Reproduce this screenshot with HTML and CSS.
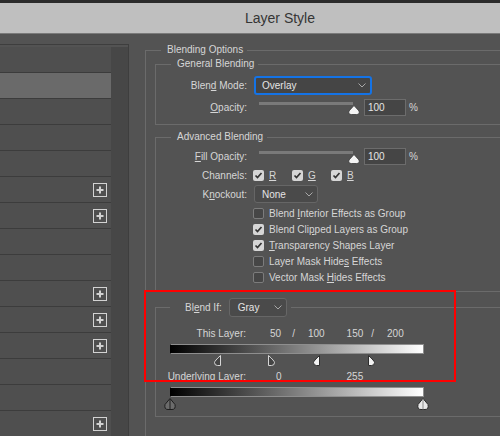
FILE: index.html
```html
<!DOCTYPE html>
<html lang="en">
<head>
  <meta charset="UTF-8" />
  <title>Layer Style</title>
  <link rel="stylesheet" href="styles.css">
</head>
<body>
  <div class="topbar"></div>
  <div class="titlebar">Layer Style</div>

  <div class="dialog">
    <aside class="styles-list">
      <ul class="rows">
        <li></li>
        <li class="sel"></li>
        <li></li>
        <li></li>
        <li></li>
        <li><svg class="add" width="14" height="14"><rect x="0.5" y="0.5" width="13" height="13" fill="none" stroke="#d2d2d2"/><path d="M7 3.5v7M3.5 7h7" stroke="#d2d2d2" stroke-width="2"/></svg></li>
        <li><svg class="add" width="14" height="14"><rect x="0.5" y="0.5" width="13" height="13" fill="none" stroke="#d2d2d2"/><path d="M7 3.5v7M3.5 7h7" stroke="#d2d2d2" stroke-width="2"/></svg></li>
        <li></li>
        <li></li>
        <li><svg class="add" width="14" height="14"><rect x="0.5" y="0.5" width="13" height="13" fill="none" stroke="#d2d2d2"/><path d="M7 3.5v7M3.5 7h7" stroke="#d2d2d2" stroke-width="2"/></svg></li>
        <li><svg class="add" width="14" height="14"><rect x="0.5" y="0.5" width="13" height="13" fill="none" stroke="#d2d2d2"/><path d="M7 3.5v7M3.5 7h7" stroke="#d2d2d2" stroke-width="2"/></svg></li>
        <li><svg class="add" width="14" height="14"><rect x="0.5" y="0.5" width="13" height="13" fill="none" stroke="#d2d2d2"/><path d="M7 3.5v7M3.5 7h7" stroke="#d2d2d2" stroke-width="2"/></svg></li>
        <li></li>
        <li></li>
        <li><svg class="add" width="14" height="14"><rect x="0.5" y="0.5" width="13" height="13" fill="none" stroke="#d2d2d2"/><path d="M7 3.5v7M3.5 7h7" stroke="#d2d2d2" stroke-width="2"/></svg></li>
      </ul>
      <div class="scroll"></div>
    </aside>

    <main class="options">
      <fieldset class="outer">
        <legend>Blending Options</legend>

        <!-- general -->
        <fieldset class="group general">
          <legend>General Blending</legend>
          <div class="field">
            <label>Blen<u>d</u> Mode:</label>
            <div class="select blend-mode"><span>Overlay</span>
              <svg width="8" height="5"><path d="M0.5 0.5L4 4L7.5 0.5" fill="none" stroke="#a8a8a8"/></svg>
            </div>
          </div>
          <div class="field slider-row">
            <label><u>O</u>pacity:</label>
            <div class="ctrl">
              <div class="slider">
                <div class="track"></div>
                <svg class="knob" width="12" height="10"><path d="M6 0.5L11 6Q12 9.5 8.5 9.5H3.5Q0 9.5 1 6Z" fill="#f4f4f4" stroke="#3a3a3a" stroke-width="0.8"/></svg>
              </div>
              <div class="num">100</div>
              <span class="pct">%</span>
            </div>
          </div>
        </fieldset>

        <!-- advanced -->
        <fieldset class="group advanced">
          <legend>Advanced Blending</legend>
          <div class="field slider-row">
            <label><u>F</u>ill Opacity:</label>
            <div class="ctrl">
              <div class="slider">
                <div class="track"></div>
                <svg class="knob" width="12" height="10"><path d="M6 0.5L11 6Q12 9.5 8.5 9.5H3.5Q0 9.5 1 6Z" fill="#f4f4f4" stroke="#3a3a3a" stroke-width="0.8"/></svg>
              </div>
              <div class="num">100</div>
              <span class="pct">%</span>
            </div>
          </div>
          <div class="field channels">
            <label>Channels:</label>
            <div class="ctrl">
              <span class="chan"><i class="box on"><svg width="11" height="11"><path d="M2.5 5.5L4.5 7.5L8.5 3" fill="none" stroke="#333" stroke-width="1.7"/></svg></i><u>R</u></span>
              <span class="chan"><i class="box on"><svg width="11" height="11"><path d="M2.5 5.5L4.5 7.5L8.5 3" fill="none" stroke="#333" stroke-width="1.7"/></svg></i><u>G</u></span>
              <span class="chan"><i class="box on"><svg width="11" height="11"><path d="M2.5 5.5L4.5 7.5L8.5 3" fill="none" stroke="#333" stroke-width="1.7"/></svg></i><u>B</u></span>
            </div>
          </div>
          <div class="field knockout">
            <label>K<u>n</u>ockout:</label>
            <div class="select small"><span>None</span>
              <svg width="8" height="5"><path d="M0.5 0.5L4 4L7.5 0.5" fill="none" stroke="#a8a8a8"/></svg>
            </div>
          </div>
          <ul class="checks">
            <li><i class="box"></i><span>Blend <u>I</u>nterior Effects as Group</span></li>
            <li><i class="box on"><svg width="11" height="11"><path d="M2.5 5.5L4.5 7.5L8.5 3" fill="none" stroke="#333" stroke-width="1.7"/></svg></i><span>Blend Cli<u>p</u>ped Layers as Group</span></li>
            <li><i class="box on"><svg width="11" height="11"><path d="M2.5 5.5L4.5 7.5L8.5 3" fill="none" stroke="#333" stroke-width="1.7"/></svg></i><span><u>T</u>ransparency Shapes Layer</span></li>
            <li><i class="box"></i><span>Layer Mask Hide<u>s</u> Effects</span></li>
            <li><i class="box"></i><span>Vector Mask <u>H</u>ides Effects</span></li>
          </ul>
        </fieldset>

        <!-- blend if -->
        <fieldset class="group blendif">
          <legend>
            <label>Bl<u>e</u>nd If:</label>
            <div class="select gray"><span>Gray</span>
              <svg width="8" height="5"><path d="M0.5 0.5L4 4L7.5 0.5" fill="none" stroke="#a8a8a8"/></svg>
            </div>
          </legend>

          <div class="range-row">
            <span class="rlabel">This Layer:</span>
            <span class="v1">50</span><span class="sl1">/</span><span class="v2">100</span>
            <span class="v3">150</span><span class="sl2">/</span><span class="v4">200</span>
          </div>
          <div class="grad"></div>
          <div class="thumbs">
            <svg class="thumb" style="left:44px" width="7" height="11"><path d="M6.5 0.5V10.5H3.5Q0.5 10.5 0.5 7.5Q0.5 6 6.5 0.5Z" fill="#444" stroke="#d6d6d6"/></svg>
            <svg class="thumb" style="left:98px" width="7" height="11"><path d="M0.5 0.5V10.5H3.5Q6.5 10.5 6.5 7.5Q6.5 6 0.5 0.5Z" fill="#444" stroke="#d6d6d6"/></svg>
            <svg class="thumb" style="left:143px" width="7" height="11"><path d="M6.5 0.5V10.5H3.5Q0.5 10.5 0.5 7.5Q0.5 6 6.5 0.5Z" fill="#f2f2f2" stroke="#2e2e2e"/></svg>
            <svg class="thumb" style="left:198px" width="7" height="11"><path d="M0.5 0.5V10.5H3.5Q6.5 10.5 6.5 7.5Q6.5 6 0.5 0.5Z" fill="#f2f2f2" stroke="#2e2e2e"/></svg>
          </div>

          <div class="range-row under">
            <span class="rlabel">Underlying Layer:</span>
            <span class="u1">0</span><span class="u2">255</span>
          </div>
          <div class="grad"></div>
          <div class="thumbs tall">
            <svg class="thumb" style="left:-6px" width="12" height="12"><path d="M6 0.5L11 6.5Q12 11.5 8 11.5H4Q0 11.5 1 6.5Z" fill="#6c6c6c" stroke="#1e1e1e"/><path d="M6 1V11.5" stroke="#1e1e1e"/></svg>
            <svg class="thumb" style="left:247px" width="12" height="12"><path d="M6 0.5L11 6.5Q12 11.5 8 11.5H4Q0 11.5 1 6.5Z" fill="#e8e8e8" stroke="#2a2a2a"/><path d="M6 1V11.5" stroke="#8a8a8a"/></svg>
          </div>
        </fieldset>
      </fieldset>
    </main>
  </div>

  <div class="callout"></div>
</body>
</html>
```

FILE: styles.css
```css
* {
  box-sizing: border-box;
}
html, body {
  margin: 0;
  padding: 0;
}
body {
  width: 500px;
  height: 436px;
  overflow: hidden;
  position: relative;
  background: #535353;
  font-family: "Liberation Sans", Arial, sans-serif;
  font-size: 10px;
  color: #d6d6d6;
}
.topbar {
  height: 3px;
  background: #2b2b2b;
}
.titlebar {
  width: 560px;
  height: 31px;
  line-height: 30px;
  background: #bfbfbf;
  border-bottom: 1px solid #7a7a7a;
  text-align: center;
  font-size: 14px;
  color: #353535;
}
.dialog {
  display: flex;
  align-items: flex-start;
}

/* left list */
.styles-list {
  display: flex;
  margin-top: 10px;
  padding-top: 2px;
  border-top: 1px solid #3e3e3e;
  border-right: 1px solid #3e3e3e;
}
.rows {
  list-style: none;
  margin: 0;
  padding: 0;
  width: 111px;
}
.rows li {
  height: 26px;
  background: #4f4f4f;
  border-bottom: 1px solid #3c3c3c;
  display: flex;
  align-items: center;
  justify-content: flex-end;
  padding-right: 4px;
}
.rows li.sel {
  background: #6a6a6a;
}
.scroll {
  width: 17px;
  background: #474747;
}

/* right side */
.options {
  margin-left: 16px;
}
fieldset {
  margin: 0;
  min-width: 0;
  border: 1px solid #6b6b6b;
}
legend {
  line-height: 12px;
  padding: 0 4px 0 6px;
}
.outer {
  width: 420px;
  margin-top: 10px;
  padding: 2px 0 40px 9px;
}
.outer > legend {
  margin-left: 6px;
}
.group {
  width: 400px;
  padding: 0;
}
.group > legend {
  margin-left: 15px;
}
.general {
  padding: 6px 0 8px;
}
.advanced {
  margin-top: 6px;
  padding: 5px 0 6px;
}

.field {
  display: grid;
  grid-template-columns: 91px auto;
  column-gap: 7px;
  align-items: center;
}
.field label {
  text-align: right;
}
.field + .field {
  margin-top: 4px;
}
.select {
  display: flex;
  align-items: center;
  justify-content: space-between;
  height: 19px;
  padding: 0 4px 0 7px;
  background: #4a4a4a;
  border: 1px solid #666;
  border-radius: 3px;
  color: #e4e4e4;
}
.blend-mode {
  width: 118px;
  padding-left: 6px;
  background: #454545;
  border: 2px solid #1473e6;
}
.select.small {
  width: 64px;
  height: 18px;
}
.ctrl {
  display: flex;
  align-items: center;
}
.slider {
  width: 106px;
  height: 17px;
  margin-right: 4px;
  display: flex;
  flex-direction: column;
}
.track {
  width: 94px;
  height: 3px;
  margin: 3px 0 0 5px;
  background: #7a7a7a;
}
.knob {
  display: block;
  margin-left: 94px;
}
.num {
  width: 42px;
  height: 17px;
  line-height: 15px;
  padding-left: 3px;
  background: #454545;
  border: 1px solid #6c6c6c;
  color: #e6e6e6;
}
.pct {
  margin-left: 3px;
}

.advanced .channels {
  margin-top: 2px;
  height: 16px;
}
.advanced .knockout {
  margin-top: 2px;
}
.chan {
  display: flex;
  align-items: center;
  width: 40px;
  margin-left: -1px;
}
.box {
  display: block;
  flex: none;
  width: 11px;
  height: 11px;
  margin-right: 5px;
  border: 1px solid #7c7c7c;
  border-radius: 2px;
  background: #464646;
}
.box.on {
  border: none;
  background: #d6d6d6;
}
.box svg {
  display: block;
}
.checks {
  list-style: none;
  margin: 2px 0 0 97px;
  padding: 0;
}
.checks li {
  display: flex;
  align-items: center;
  height: 16px;
}

/* blend if */
.blendif {
  margin-top: 6px;
  padding: 0 0 6px;
}
.blendif > legend {
  display: flex;
  align-items: center;
  margin-left: 14px;
  padding: 0 4px 0 15px;
}
.select.gray {
  width: 58px;
  margin-left: 7px;
  padding-left: 8px;
}
.range-row {
  display: flex;
  height: 12px;
  line-height: 12px;
  margin-top: 11px;
}
.range-row.under {
  margin-top: 5px;
}
.rlabel {
  width: 90px;
  text-align: right;
}
.v1 { margin-left: 24px; }
.sl1 { margin-left: 11px; }
.v2 { margin-left: 13px; }
.v3 { margin-left: 22px; }
.sl2 { margin-left: 8px; }
.v4 { margin-left: 13px; }
.u1 { margin-left: 30px; }
.u2 { margin-left: 65px; }
.grad {
  width: 254px;
  height: 10px;
  margin: 4px 0 0 14px;
  border: 1px solid #8e8e8e;
  border-left-color: #000;
  background: linear-gradient(to right, #000, #fff);
}
.thumbs {
  position: relative;
  width: 254px;
  height: 11px;
  margin: 1px 0 0 14px;
}
.thumbs.tall {
  height: 12px;
}
.thumb {
  position: absolute;
  top: 0;
}

.callout {
  position: absolute;
  left: 144px;
  top: 290px;
  width: 312px;
  height: 92px;
  border: 2px solid #f00;
}
```
